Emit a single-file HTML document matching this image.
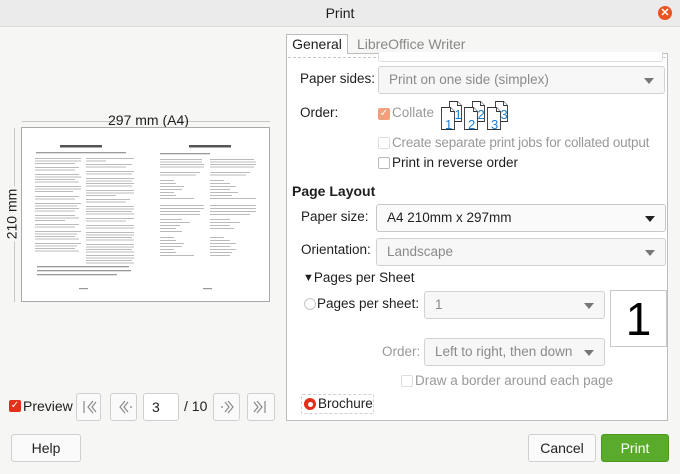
<!DOCTYPE html>
<html><head><meta charset="utf-8"><style>
*{box-sizing:border-box;margin:0;padding:0}
body{width:680px;height:474px;overflow:hidden;background:#f6f6f5;font-family:"Liberation Sans",sans-serif;font-size:13.5px;color:#1e1e1e;position:relative}
.a{position:absolute;white-space:nowrap}
.title{left:0;top:0;width:680px;height:27px;background:#ebebeb;border-bottom:1px solid #dcdcdc;text-align:center;line-height:26px;font-size:14px}
.close{left:658px;top:6px;width:14px;height:14px;border-radius:7px;background:#e95420;color:#fff;font-size:11px;line-height:14px;text-align:center;font-weight:bold}
.panel{left:286px;top:53px;width:382px;height:368px;background:#fff;border:1px solid #bdbdbd}
.combo{position:absolute;border:1px solid #d2d2d2;border-radius:3px;background:#f7f7f7;height:28px;line-height:26px;padding-left:10px;color:#8a8a8a}
.combo.act{color:#222;background:#fafafa;border-color:#c8c8c8}
.combo:after{content:"";position:absolute;right:10px;top:11px;border-left:5px solid transparent;border-right:5px solid transparent;border-top:6px solid #777}
.combo.act:after{border-top-color:#222}
.cb{position:absolute;width:12px;height:12px;border:1px solid #b8b8b8;border-radius:2px;background:#fff}
.dis{color:#999}
.btn{position:absolute;border:1px solid #cfcfcf;border-radius:3px;background:#fafafa;text-align:center;color:#222}
</style></head><body>
<div class="a title">Print</div>
<div class="a close">✕</div>

<div class="a" style="left:22px;top:121px;width:95px;border-top:1px solid #c8c8c8"></div>
<div class="a" style="left:178px;top:121px;width:92px;border-top:1px solid #c8c8c8"></div>
<div class="a" style="left:108px;top:112px;font-size:14px">297 mm (A4)</div>
<div class="a" style="left:14px;top:128px;height:174px;border-left:1px solid #c8c8c8"></div>
<div class="a" style="left:-16px;top:206px;font-size:14px;transform:rotate(-90deg);background:#f6f6f5;padding:0 2px">210 mm</div>
<svg class="a" style="left:21px;top:127px" width="249" height="175" viewBox="21 127 249 175">
<rect x="21.5" y="127.5" width="248" height="174" fill="#fff" stroke="#aaa"/>
<g fill="#555"><rect x="60" y="145" width="42" height="2.5"/><rect x="189" y="145" width="42" height="2.5"/></g>
<g fill="#999"><rect x="36" y="152" width="90" height="1.3"/><rect x="160" y="153" width="50" height="1.3"/></g>
<g fill="#bbb">
<rect x="35" y="158" width="46" height="1"/><rect x="35" y="160.5" width="46" height="1"/><rect x="35" y="163" width="40" height="1"/>
<rect x="35" y="167" width="44" height="1"/><rect x="35" y="169.5" width="40" height="1"/>
<rect x="35" y="174" width="44" height="1"/><rect x="35" y="176.5" width="46" height="1"/><rect x="35" y="179" width="40" height="1"/><rect x="35" y="181.5" width="44" height="1"/>
<rect x="35" y="186" width="46" height="1"/><rect x="35" y="188.5" width="46" height="1"/><rect x="35" y="191" width="38" height="1"/>
<rect x="35" y="196" width="44" height="1"/><rect x="35" y="198.5" width="40" height="1"/>
<rect x="35" y="203" width="46" height="1"/><rect x="35" y="205.5" width="42" height="1"/><rect x="35" y="208" width="44" height="1"/><rect x="35" y="210.5" width="40" height="1"/>
<rect x="35" y="215" width="40" height="1"/><rect x="35" y="217.5" width="44" height="1"/><rect x="35" y="220" width="30" height="1"/>
<rect x="35" y="224" width="44" height="1"/><rect x="35" y="226.5" width="40" height="1"/>
<rect x="35" y="231" width="46" height="1"/><rect x="35" y="233.5" width="42" height="1"/><rect x="35" y="236" width="40" height="1"/><rect x="35" y="238.5" width="44" height="1"/>
<rect x="35" y="243" width="46" height="1"/><rect x="35" y="245.5" width="42" height="1"/><rect x="35" y="248" width="40" height="1"/><rect x="35" y="250.5" width="44" height="1"/>
<rect x="86" y="158" width="48" height="1"/><rect x="86" y="160.5" width="20" height="1"/><rect x="86" y="164" width="46" height="1"/><rect x="86" y="166.5" width="40" height="1"/>
<rect x="86" y="171" width="48" height="1"/><rect x="86" y="173.5" width="46" height="1"/><rect x="86" y="178" width="48" height="1"/><rect x="86" y="180.5" width="46" height="1"/><rect x="86" y="183" width="48" height="1"/><rect x="86" y="185.5" width="46" height="1"/>
<rect x="86" y="190" width="48" height="1"/><rect x="86" y="192.5" width="48" height="1"/><rect x="86" y="195" width="30" height="1"/><rect x="86" y="199" width="44" height="1"/><rect x="86" y="201.5" width="40" height="1"/>
<rect x="86" y="206" width="48" height="1"/><rect x="86" y="208.5" width="48" height="1"/><rect x="86" y="211" width="46" height="1"/><rect x="86" y="213.5" width="48" height="1"/>
<rect x="86" y="218" width="48" height="1"/><rect x="86" y="220.5" width="40" height="1"/><rect x="86" y="225" width="48" height="1"/><rect x="86" y="227.5" width="48" height="1"/>
<rect x="86" y="232" width="48" height="1"/><rect x="86" y="234.5" width="48" height="1"/><rect x="86" y="237" width="46" height="1"/><rect x="86" y="239.5" width="48" height="1"/>
<rect x="86" y="244" width="48" height="1"/><rect x="86" y="246.5" width="48" height="1"/><rect x="86" y="249" width="46" height="1"/><rect x="86" y="251.5" width="48" height="1"/>
<rect x="86" y="255" width="48" height="1"/><rect x="86" y="257.5" width="48" height="1"/><rect x="86" y="260" width="46" height="1"/><rect x="86" y="262.5" width="48" height="1"/>
</g>
<g fill="#bbb">
<rect x="160" y="159" width="42" height="1"/><rect x="160" y="161.5" width="42" height="1"/><rect x="160" y="164" width="44" height="1"/><rect x="160" y="166.5" width="44" height="1"/>
<rect x="160" y="172" width="40" height="1"/><rect x="160" y="174.5" width="36" height="1"/>
<rect x="160" y="180" width="14" height="1"/><rect x="160" y="183" width="16" height="1"/><rect x="160" y="186" width="24" height="1"/><rect x="160" y="189" width="22" height="1"/><rect x="160" y="192" width="14" height="1"/><rect x="160" y="195" width="16" height="1"/><rect x="160" y="198" width="34" height="1"/>
<rect x="160" y="205" width="44" height="1"/><rect x="160" y="208" width="44" height="1"/><rect x="160" y="211" width="40" height="1"/><rect x="160" y="214" width="40" height="1"/>
<rect x="160" y="219" width="22" height="1"/><rect x="160" y="222" width="30" height="1"/><rect x="160" y="225" width="20" height="1"/><rect x="160" y="228" width="16" height="1"/><rect x="160" y="231" width="22" height="1"/>
<rect x="160" y="237" width="14" height="1"/><rect x="160" y="240" width="16" height="1"/><rect x="160" y="243" width="24" height="1"/><rect x="160" y="246" width="22" height="1"/><rect x="160" y="249" width="14" height="1"/><rect x="160" y="252" width="16" height="1"/><rect x="160" y="255" width="34" height="1"/>
<rect x="210" y="159" width="44" height="1"/><rect x="210" y="161.5" width="46" height="1"/><rect x="210" y="164" width="46" height="1"/><rect x="210" y="166.5" width="44" height="1"/>
<rect x="210" y="172" width="40" height="1"/><rect x="210" y="174.5" width="36" height="1"/>
<rect x="210" y="180" width="14" height="1"/><rect x="210" y="183" width="20" height="1"/><rect x="210" y="186" width="26" height="1"/><rect x="210" y="189" width="20" height="1"/><rect x="210" y="192" width="28" height="1"/><rect x="210" y="195" width="22" height="1"/><rect x="210" y="198" width="46" height="1"/>
<rect x="210" y="205" width="46" height="1"/><rect x="210" y="208" width="46" height="1"/><rect x="210" y="211" width="46" height="1"/><rect x="210" y="214" width="40" height="1"/>
<rect x="210" y="219" width="20" height="1"/><rect x="210" y="222" width="30" height="1"/><rect x="210" y="225" width="20" height="1"/><rect x="210" y="228" width="24" height="1"/>
<rect x="210" y="237" width="14" height="1"/><rect x="210" y="240" width="20" height="1"/><rect x="210" y="243" width="26" height="1"/><rect x="210" y="246" width="20" height="1"/><rect x="210" y="249" width="26" height="1"/><rect x="210" y="252" width="22" height="1"/><rect x="210" y="255" width="20" height="1"/>
</g>
<g fill="#999"><rect x="37" y="266" width="92" height="1.3"/><rect x="37" y="270" width="94" height="1.3"/><rect x="37" y="274" width="80" height="1.3"/>
<rect x="79" y="288" width="9" height="1.2"/><rect x="203" y="288" width="9" height="1.2"/></g>
</svg>

<div class="a" style="left:9px;top:400px;width:12px;height:12px;border-radius:2px;background:#e2301b;color:#fff;font-size:10px;line-height:12px;text-align:center">✓</div>
<div class="a" style="left:23px;top:398px;font-size:14px">Preview</div>
<div class="btn" style="left:76px;top:393px;width:25px;height:28px"></div>
<div class="btn" style="left:110px;top:393px;width:27px;height:28px"></div>
<div class="btn" style="left:143px;top:393px;width:36px;height:28px;background:#fff;text-align:left;padding-left:8px;line-height:26px;font-size:14px">3</div>
<div class="a" style="left:184px;top:398px;font-size:14px">/ 10</div>
<div class="btn" style="left:213px;top:393px;width:27px;height:28px"></div>
<div class="btn" style="left:247px;top:393px;width:28px;height:28px"></div>
<svg class="a" style="left:0;top:393px" width="280" height="28" fill="none" stroke="#888" stroke-width="1.2">
<path d="M84 8v12M93 8l-5 6 5 6M96 9l-4 5 4 5"/>
<path d="M125 8l-5 6 5 6M128 9l-4 5 4 5M130 14h2"/>
<path d="M228 8l5 6-5 6M225 9l4 5-4 5M221 14h2"/>
<path d="M257 8l5 6-5 6M254 9l4 5-4 5M265 8v12"/>
</svg>

<div class="a" style="left:286px;top:34px;width:62px;height:20px;background:#fff;border:1px solid #bdbdbd;border-bottom:none;z-index:2;text-align:center;line-height:19px;font-size:14px">General</div>
<div class="a" style="left:357px;top:36px;font-size:14px;color:#888">LibreOffice Writer</div>
<div class="a panel"></div>
<div class="a" style="left:288px;top:57px;width:378px;border-top:1px dashed #c8c8c8"></div>
<div class="a" style="left:378px;top:52px;width:285px;height:10px;border:1px solid #ddd;border-top:none;border-radius:0 0 3px 3px;background:#fff"></div>

<div class="a" style="left:300px;top:71px">Paper sides:</div>
<div class="combo" style="left:378px;top:66px;width:287px">Print on one side (simplex)</div>
<div class="a" style="left:300px;top:105px">Order:</div>
<div class="a" style="left:378px;top:108px;width:12px;height:12px;border-radius:2px;background:#f0a07a;color:#fff;font-size:10px;line-height:12px;text-align:center">✓</div>
<div class="a dis" style="left:392px;top:105px">Collate</div>
<svg class="a" style="left:440px;top:99px" width="86" height="32" fill="#fff" stroke="#333" stroke-width="0.9" font-family="Liberation Sans" font-size="13">
<g><path d="M9.5 2.5h8l4 4v16h-12z"/><path d="M17.5 2.5v4h4"/><path d="M1.5 8.5h9l4 4v18h-13z"/><path d="M10.5 8.5v4h4"/><text x="14.5" y="20" fill="#1b7fd3" stroke="none">1</text><text x="5" y="30" fill="#1b7fd3" stroke="none">1</text></g>
<g transform="translate(23 0)"><path d="M9.5 2.5h8l4 4v16h-12z"/><path d="M17.5 2.5v4h4"/><path d="M1.5 8.5h9l4 4v18h-13z"/><path d="M10.5 8.5v4h4"/><text x="14.5" y="20" fill="#1b7fd3" stroke="none">2</text><text x="5" y="30" fill="#1b7fd3" stroke="none">2</text></g>
<g transform="translate(46 0)"><path d="M9.5 2.5h8l4 4v16h-12z"/><path d="M17.5 2.5v4h4"/><path d="M1.5 8.5h9l4 4v18h-13z"/><path d="M10.5 8.5v4h4"/><text x="14.5" y="20" fill="#1b7fd3" stroke="none">3</text><text x="5" y="30" fill="#1b7fd3" stroke="none">3</text></g>
</svg>
<div class="cb" style="left:378px;top:137px;border-color:#ddd"></div>
<div class="a dis" style="left:392px;top:135px;letter-spacing:-0.2px">Create separate print jobs for collated output</div>
<div class="cb" style="left:378px;top:157px"></div>
<div class="a" style="left:392px;top:155px">Print in reverse order</div>

<div class="a" style="left:292px;top:183px;font-size:14px;font-weight:bold">Page Layout</div>
<div class="a" style="left:301px;top:209px">Paper size:</div>
<div class="combo act" style="left:376px;top:204px;width:290px">A4 210mm x 297mm</div>
<div class="a" style="left:301px;top:242px">Orientation:</div>
<div class="combo" style="left:376px;top:238px;width:290px">Landscape</div>
<div class="a" style="left:303px;top:270px"><span style="font-size:11px;position:relative;top:-1px">▼</span>Pages per Sheet</div>
<div class="a" style="left:304px;top:298px;width:12px;height:12px;border:1px solid #c8c8c8;border-radius:6px;background:#fff"></div>
<div class="a" style="left:317px;top:296px">Pages per sheet:</div>
<div class="combo" style="left:424px;top:291px;width:181px">1</div>
<div class="a" style="left:610px;top:290px;width:57px;height:57px;border:1px solid #c8c8c8;background:#fff;text-align:center;font-size:46px;line-height:56px;color:#000">1</div>
<div class="a dis" style="left:382px;top:344px">Order:</div>
<div class="combo" style="left:424px;top:338px;width:181px">Left to right, then down</div>
<div class="cb" style="left:401px;top:375px;border-color:#ddd"></div>
<div class="a dis" style="left:415px;top:373px">Draw a border around each page</div>
<div class="a" style="left:301px;top:394px;width:73px;height:20px;border:1px dashed #d0d0d0;border-radius:2px"></div>
<div class="a" style="left:304px;top:398px;width:12px;height:12px;border-radius:6px;background:#e2301b"><div style="margin:3.5px;width:5px;height:5px;border-radius:3px;background:#fff"></div></div>
<div class="a" style="left:318px;top:396px">Brochure</div>

<div class="btn" style="left:11px;top:434px;width:70px;height:28px;line-height:26px;font-size:14px">Help</div>
<div class="btn" style="left:528px;top:434px;width:68px;height:28px;line-height:26px;font-size:14px">Cancel</div>
<div class="btn" style="left:601px;top:434px;width:68px;height:28px;line-height:26px;font-size:14px;background:#5aab2c;border-color:#4a9a20;color:#fff">Print</div>
</body></html>
